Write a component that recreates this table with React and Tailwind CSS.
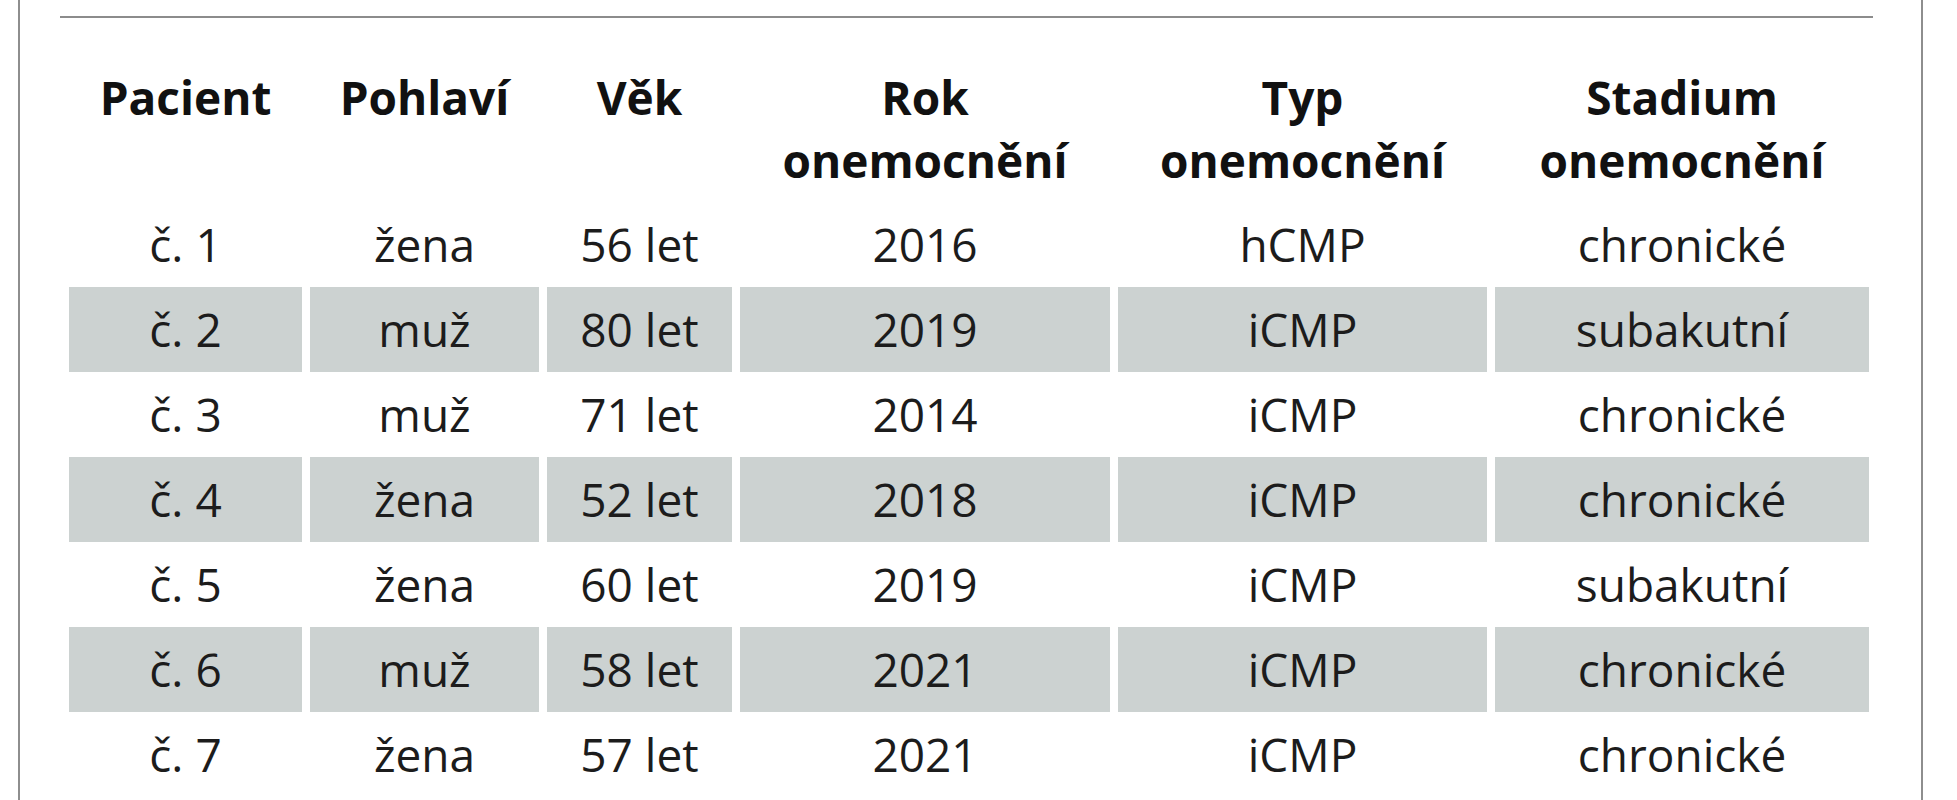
const headers = [
  ["Pacient"],
  ["Pohlaví"],
  ["Věk"],
  ["Rok", "onemocnění"],
  ["Typ", "onemocnění"],
  ["Stadium", "onemocnění"],
];

const rows = [
  ["č. 1", "žena", "56 let", "2016", "hCMP", "chronické"],
  ["č. 2", "muž", "80 let", "2019", "iCMP", "subakutní"],
  ["č. 3", "muž", "71 let", "2014", "iCMP", "chronické"],
  ["č. 4", "žena", "52 let", "2018", "iCMP", "chronické"],
  ["č. 5", "žena", "60 let", "2019", "iCMP", "subakutní"],
  ["č. 6", "muž", "58 let", "2021", "iCMP", "chronické"],
  ["č. 7", "žena", "57 let", "2021", "iCMP", "chronické"],
];

const cols = "grid grid-cols-[233px_229px_185px_370px_369px_374px] gap-x-2";

export default function App() {
  return (
    <div className="min-h-[800px] bg-white font-['Open_Sans',sans-serif]">
      <div className="ml-[18px] w-[1905px] min-h-[800px] border-x-2 border-[#8e8e8e] pt-4">
        <div className="ml-10 mr-12 h-[2px] bg-[#8c8c8c]" />

        <div className="ml-[49px] mr-12">
          <div className={`${cols} pt-12 pb-[10px]`}>
            {headers.map((h) => (
              <div
                key={h[0]}
                className="text-center text-[46px] leading-[63px] font-bold text-[#111]"
              >
                {h.map((line) => (
                  <div key={line}>{line}</div>
                ))}
              </div>
            ))}
          </div>

          {rows.map((row, i) => (
            <div key={row[0]} className={`${cols} h-[85px]`}>
              {row.map((cell, j) => (
                <div
                  key={j}
                  className={`flex items-center justify-center text-[46px] text-[#1c1c1c] ${
                    i % 2 === 1 ? "bg-[#ccd2d1]" : ""
                  }`}
                >
                  {cell}
                </div>
              ))}
            </div>
          ))}
        </div>
      </div>
    </div>
  );
}
